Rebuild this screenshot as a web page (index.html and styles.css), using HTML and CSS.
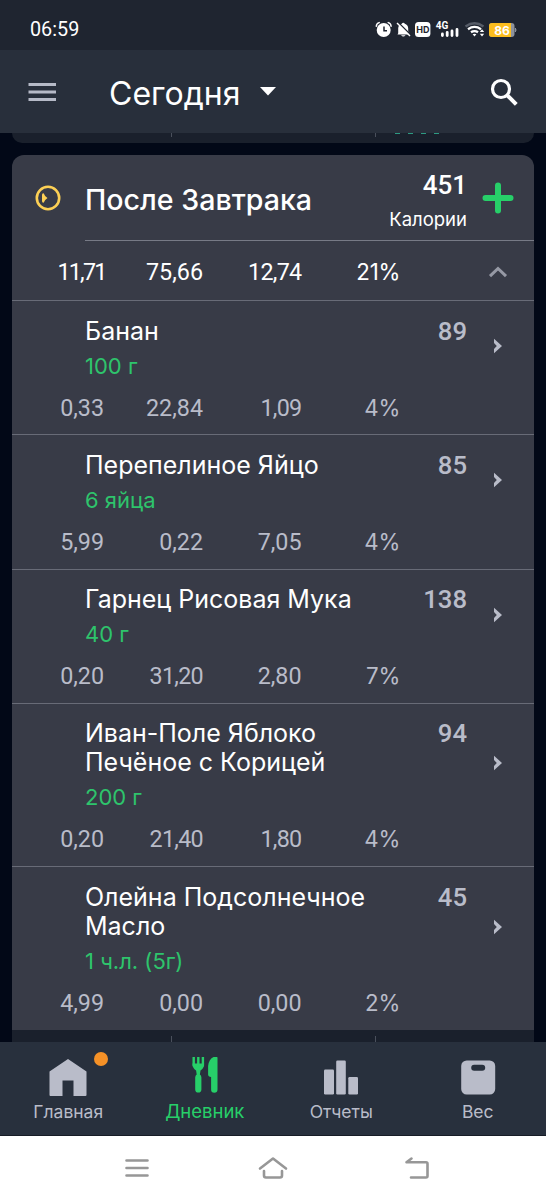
FILE: index.html
```html
<!DOCTYPE html>
<html lang="ru">
<head>
  <meta charset="UTF-8" />
  <meta name="viewport" content="width=device-width, initial-scale=1.0"/>
  <title>Дневник</title>
  <link rel="stylesheet" href="styles.css">
</head>
<body>
  <div class="statusbar">
    <span class="clock">06:59</span>
    <svg class="status-icons" width="146" height="20" viewBox="0 0 146 20">
      <!-- alarm -->
      <circle cx="12.700" cy="10" r="7" fill="#fff"/>
      <path d="M5.300 6.200Q5.500 3.400 8.200 2.600M20.100 6.200Q19.900 3.400 17.200 2.600" stroke="#fff" stroke-width="1.500" fill="none" stroke-linecap="round"/>
      <path d="M13 6.500V10.700H16" stroke="#1f2530" stroke-width="1.500" fill="none"/>
      <!-- muted bell -->
      <path d="M27.200 13.200V8.300a5 5 0 0 1 3.600-4.600a1.700 1.700 0 0 1 3 0a5 5 0 0 1 3.400 4.600V11.500L38.800 13.800V14.400H26.500zM30 15.300h4.600q-2.300 2.500-4.600 0z" fill="#fff"/>
      <path d="M27.500 2.800L40 15.300" stroke="#1f2530" stroke-width="1.600"/>
      <path d="M26 3L39 16" stroke="#fff" stroke-width="1.400"/>
      <!-- hd -->
      <rect x="44" y="2" width="15.400" height="15" rx="3.500" fill="#fff"/>
      <text x="45.200" y="12.800" class="hd">HD</text>
      <!-- signal -->
      <text x="64.800" y="9" class="net">4G</text>
      <path d="M71.400 14v1.500M76.200 12.300v3.200M81 11v4.500M86 9.500v6" stroke="#fff" stroke-width="2.800" stroke-linecap="round"/>
      <!-- wifi -->
      <path d="M94.500 6.500q9-6.500 18 0" stroke="#565c67" stroke-width="2.300" fill="none"/>
      <path d="M97 9.200q6.500-4.500 13 0M100 12.300q3.500-2.500 7 0" stroke="#fff" stroke-width="2.300" fill="none"/>
      <path d="M101.600 14.300q1.900-1.300 3.800 0l-1.900 2.300zM108.800 12l2.200-2.800 2.200 2.800zM108.800 13.700h4.400l-2.200 2.800z" fill="#fff"/>
      <!-- battery -->
      <rect x="118" y="3" width="25.500" height="14" rx="3" fill="#8d929b"/>
      <path d="M121 3h19v14h-19a3 3 0 0 1-3-3V6a3 3 0 0 1 3-3z" fill="#fcbd1d"/>
      <path d="M144.300 8q1.500 2 0 4z" fill="#8d929b" stroke="#8d929b"/>
      <text x="123.300" y="14.500" class="bat">86</text>
    </svg>
  </div>

  <header class="topbar">
    <svg width="28" height="20" viewBox="0 0 28 20"><path d="M.5 2.500h27.500M.5 10h27.500M.5 17.500h27.500" stroke="#b6bac7" stroke-width="3"/></svg>
    <h1>Сегодня</h1>
    <svg class="caret" width="16" height="9" viewBox="0 0 16 9"><path d="M0 0h16L8 8.500z" fill="#fff"/></svg>
    <svg class="search" width="28" height="28" viewBox="0 0 28 28"><circle cx="11" cy="11" r="8.500" fill="none" stroke="#fff" stroke-width="3.200"/><path d="M16.500 16.500l9.800 9.800" stroke="#fff" stroke-width="4" fill="none"/></svg>
  </header>

  <main>
    <div class="prev-card">
      <i class="tick"></i><i class="tick"></i>
      <span class="cut"><i></i><i></i><i></i><i></i></span>
    </div>

    <section class="meal">
      <div class="meal-head">
        <svg class="meal-icon" width="26" height="26" viewBox="0 0 26 26"><circle cx="13" cy="13" r="11.200" fill="none" stroke="#fdd055" stroke-width="2.600"/><path d="M7 10q0-2 1.800-1.600Q9.500 11 12.500 13Q9.500 15 8.800 17.600Q7 18 7 16z" fill="#fdd055"/></svg>
        <div class="meal-title">
          <h2>После Завтрака</h2>
          <div class="total"><b>451</b><span>Калории</span></div>
          <svg class="plus" width="32" height="32" viewBox="0 0 32 32"><path d="M16 3.500v25M3.500 16h25" stroke="#27cf69" stroke-width="6" stroke-linecap="round"/></svg>
        </div>
      </div>
      <div class="nums sum">
        <span class="ones">11,71</span><span>75,66</span><span class="one">12,74</span><span class="pct">21%</span>
        <svg class="up" width="20" height="12" viewBox="0 0 20 12"><path d="M2 10.200L10 2.500l8 7.700" fill="none" stroke="#9699a5" stroke-width="3"/></svg>
      </div>

      <article class="food">
        <div class="name">Банан</div><div class="kcal">89</div>
        <div class="qty">100 г</div>
        <div class="nums"><span>0,33</span><span>22,84</span><span class="one">1,09</span><span class="pct">4%</span></div>
        <svg class="go" width="9" height="16" viewBox="0 0 9 16"><path d="M1 .8L9 8 1 15.200V11L3.800 8 1 5z"/></svg>
      </article>
      <article class="food">
        <div class="name">Перепелиное Яйцо</div><div class="kcal">85</div>
        <div class="qty">6 яйца</div>
        <div class="nums"><span>5,99</span><span>0,22</span><span>7,05</span><span class="pct">4%</span></div>
        <svg class="go" width="9" height="16" viewBox="0 0 9 16"><path d="M1 .8L9 8 1 15.200V11L3.800 8 1 5z"/></svg>
      </article>
      <article class="food">
        <div class="name">Гарнец Рисовая Мука</div><div class="kcal">138</div>
        <div class="qty">40 г</div>
        <div class="nums"><span>0,20</span><span class="one">31,20</span><span>2,80</span><span class="pct">7%</span></div>
        <svg class="go" width="9" height="16" viewBox="0 0 9 16"><path d="M1 .8L9 8 1 15.200V11L3.800 8 1 5z"/></svg>
      </article>
      <article class="food">
        <div class="name">Иван-Поле Яблоко<br>Печёное с Корицей</div><div class="kcal">94</div>
        <div class="qty">200 г</div>
        <div class="nums"><span>0,20</span><span class="one">21,40</span><span class="one">1,80</span><span class="pct">4%</span></div>
        <svg class="go" width="9" height="16" viewBox="0 0 9 16"><path d="M1 .8L9 8 1 15.200V11L3.800 8 1 5z"/></svg>
      </article>
      <article class="food">
        <div class="name">Олейна Подсолнечное<br>Масло</div><div class="kcal">45</div>
        <div class="qty">1 ч.л. (5г)</div>
        <div class="nums"><span>4,99</span><span>0,00</span><span>0,00</span><span class="pct">2%</span></div>
        <svg class="go" width="9" height="16" viewBox="0 0 9 16"><path d="M1 .8L9 8 1 15.200V11L3.800 8 1 5z"/></svg>
      </article>
      <div class="meal-foot"><i class="tick"></i><i class="tick"></i></div>
    </section>
  </main>

  <nav class="tabs">
    <a class="tab">
      <svg width="40" height="40" viewBox="0 0 40 40"><path d="M20 2L38.500 14.500V38q0 1-1 1H25.500V23.500H14.500V39H2.500q-1 0-1-1V14.500z" fill="#b9bcc9"/></svg>
      <span>Главная</span>
      <i class="dot"></i>
    </a>
    <a class="tab active">
      <svg width="40" height="40" viewBox="0 0 40 40"><path d="M8.700 0v8.500M13.300 0v8.500M17.900 0v8.500" stroke="#27cf69" stroke-width="2.400" stroke-linecap="round" fill="none"/><path d="M7.500 6.500h11.600q0 5-3.600 7l-.6 4q1.500 1 1.500 3V32.500a3.100 3.100 0 0 1-6.200 0V20.500q0-2 1.500-3l-.6-4q-3.600-2-3.600-7zM32.500 1V32.500a3.200 3.200 0 0 1-6.400 0V20q-3-.3-3-2.500V9q1-8.500 7.400-9.500q2 0 2 1.500z" fill="#27cf69"/></svg>
      <span>Дневник</span>
    </a>
    <a class="tab">
      <svg width="40" height="40" viewBox="0 0 40 40"><g fill="#b9bcc9"><rect x="3" y="12.500" width="10" height="25" rx="1.200"/><rect x="15.200" y="3.500" width="9.600" height="34" rx="1.200"/><rect x="27.300" y="20" width="9.700" height="17.500" rx="1.200"/></g></svg>
      <span>Отчеты</span>
    </a>
    <a class="tab">
      <svg width="40" height="40" viewBox="0 0 40 40"><rect x="3.200" y="3.500" width="34" height="34" rx="5.500" fill="#b9bcc9"/><rect x="13.200" y="7.800" width="14" height="6" rx="3" fill="#28303d"/></svg>
      <span>Вес</span>
    </a>
  </nav>

  <footer class="sysnav">
    <svg width="24" height="20" viewBox="0 0 24 20"><path d="M1.500 2.500h21M1.500 10h21M1.500 17.500h21"/></svg>
    <svg width="30" height="24" viewBox="0 0 30 24"><path d="M2 12.500L15 2.500l13 10M6 15v4.500q0 2 2 2h14q2 0 2-2V15"/></svg>
    <svg width="26" height="24" viewBox="0 0 26 24"><path d="M7.500 2.500L2.500 6.300H22q1.500 0 1.500 1.500v12.200q0 1.500-1.500 1.500H7"/></svg>
  </footer>
</body>
</html>
```
FILE: styles.css
```css
* {
  box-sizing: border-box;
}
body {
  margin: 0;
  height: 1200px;
  display: flex;
  flex-direction: column;
  overflow: hidden;
  background: #020817;
  color: #fff;
  font-family: Inter, "Noto Sans", sans-serif;
}
svg {
  display: block;
  flex: none;
}
h1, h2 {
  margin: 0;
  font-weight: normal;
}

/* status bar */
.statusbar {
  height: 50px;
  flex: none;
  display: flex;
  justify-content: space-between;
  padding: 20px 30px 0 30px;
  background: #1f2530;
}
.clock {
  font: 19.8px/20px Roboto, sans-serif;
}
.status-icons {
  margin-right: -0.5px;
}
.hd {
  font: bold 9px Inter, sans-serif;
  fill: #1f2530;
}
.net {
  font: bold 10px Roboto, sans-serif;
  fill: #fff;
}
.bat {
  font: bold 12px Inter, sans-serif;
  fill: #fff;
}

/* top bar */
.topbar {
  height: 83px;
  flex: none;
  display: flex;
  align-items: center;
  padding: 0 28px;
  background: #282f3b;
}
.topbar h1 {
  margin: 4px 20px 0 53px;
  font-size: 32px;
  line-height: 40px;
}
.search {
  margin-left: auto;
}

main {
  height: 909px;
  flex: none;
  padding: 0 12px;
  overflow: hidden;
}
.prev-card {
  display: grid;
  grid-template-columns: 159px 204px 1fr;
  height: 10px;
  margin-bottom: 12px;
  background: #1a202c;
  border-radius: 0 0 12px 12px;
}
.tick {
  height: 4px;
  border-right: 1px solid #4a505c;
  margin-right: -1px;
}
.cut {
  display: flex;
  gap: 8px;
  padding-left: 20px;
}
.cut i {
  width: 5px;
  height: 1px;
  background: #2d9a82;
}

/* meal card */
.meal {
  background: #383b47;
  border-radius: 12px 12px 0 0;
}
.meal-head {
  display: flex;
  padding-left: 23px;
  height: 86px;
}
.meal-icon {
  margin: 30px 24px 0 0;
}
.meal-title {
  flex: 1;
  display: flex;
  border-bottom: 1px solid #777a86;
}
.meal-title h2 {
  flex: 1;
  font-size: 28.6px;
  font-weight: 500;
  line-height: 34px;
  margin-top: 28px;
  white-space: nowrap;
}
.total {
  width: 100px;
  text-align: right;
  padding-top: 15px;
}
.total b {
  display: block;
  font: 500 26px/30px Roboto, sans-serif;
}
.total span {
  font-size: 18.5px;
  line-height: 38px;
}
.plus {
  margin: 27px 20px 0 15px;
}
.nums {
  display: grid;
  grid-template-columns: 92px 99px 98.500px 98.500px 1fr;
  align-items: center;
  text-align: right;
  font: 23.3px/28px Roboto, sans-serif;
  color: #b9bcc9;
}
/* tighter spacing for numbers with a 1 */
.one {
  letter-spacing: -0.7px;
}
.ones {
  letter-spacing: -1.8px;
  margin-right: -1.5px;
}
.pct {
  font: 22.3px/28px Inter, sans-serif;
  letter-spacing: -0.3px;
}
.sum {
  height: 60px;
  padding-top: 2px;
  color: #fff;
  border-bottom: 1px solid #686b77;
}
.up {
  justify-self: end;
  margin-right: 26.5px;
}

/* food rows */
.food {
  display: grid;
  grid-template-columns: 73px 1fr 92px 67px;
  padding: 15.500px 0 12.800px;
  border-bottom: 1px solid #686b77;
}
.name {
  grid-column: 2;
  white-space: nowrap;
  font-size: 25px;
  line-height: 29px;
}
.kcal {
  grid-column: 3;
  text-align: right;
  font: 500 25.7px/29px Roboto, sans-serif;
  height: 29px;
  color: #b9bcc9;
}
.qty {
  grid-column: 2 / 4;
  margin: 6px 0 13px;
  font-size: 22px;
  line-height: 29px;
  color: #2ec46c;
}
.food .nums {
  grid-column: 1 / 5;
  grid-row: 3;
}
.go {
  grid-column: 4;
  grid-row: 1 / 3;
  align-self: center;
  margin: 0 0 18px 26px;
  fill: #b9bcc9;
}
.meal .food:nth-last-child(2) {
  border-bottom: 0;
}
.meal-foot {
  display: grid;
  grid-template-columns: 159px 204px 1fr;
  align-items: end;
  height: 12px;
  margin-top: 0.8px;
  background: #1a202c;
}
.meal-foot .tick {
  height: 6px;
}

/* bottom tabs */
.tabs {
  height: 94px;
  flex: none;
  display: grid;
  grid-template-columns: repeat(4, 1fr);
  background: #28303d;
  border-bottom: 1px solid #171c26;
}
.tab {
  position: relative;
  display: flex;
  flex-direction: column;
  align-items: center;
  padding-top: 15px;
  font-size: 17.5px;
  line-height: 29px;
  color: #b9bcc9;
}
.active {
  font-size: 18.5px;
  color: #27cf69;
}
.dot {
  position: absolute;
  left: 94px;
  top: 10px;
  width: 14px;
  height: 14px;
  border-radius: 50%;
  background: #f59127;
}

/* system buttons */
.sysnav {
  flex: 1;
  display: flex;
  justify-content: space-between;
  align-items: center;
  padding: 0 116px 0 124.5px;
  background: #fff;
}
.sysnav svg {
  fill: none;
  stroke: #979797;
  stroke-width: 2.6;
  stroke-linecap: round;
  stroke-linejoin: round;
}
.sysnav svg:nth-child(2) {
  margin-right: 6px;
}
```
